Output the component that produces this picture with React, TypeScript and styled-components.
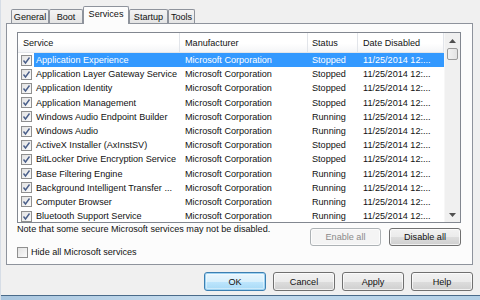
import React from "react";
import styled, { createGlobalStyle, css } from "styled-components";

const Global = createGlobalStyle`
  html, body { margin: 0; padding: 0; }
  body { background: #f0f0f0; font-family: "Liberation Sans", Arial, sans-serif; }
`;

const Window = styled.div`
  width: 480px;
  height: 300px;
  overflow: hidden;
  background: #f0f0f0;
  display: flex;
  flex-direction: column;
  font-size: 9.1px;
  color: #111;
  box-sizing: border-box;
  border-left: 1px solid #d6dde6;
`;

const Body = styled.div`
  display: flex;
  flex-direction: column;
  padding: 5px 7px 0 5px;
`;

const TabStrip = styled.div`
  display: flex;
  align-items: flex-end;
  height: 18px;
  padding-left: 5px;
  position: relative;
  z-index: 1;
`;

const Tab = styled.div<{ $w: number; $active?: boolean }>`
  box-sizing: border-box;
  width: ${(p) => p.$w}px;
  height: 14px;
  display: flex;
  align-items: center;
  justify-content: center;
  border: 1px solid #8e939c;
  border-bottom: none;
  background: linear-gradient(#f4f4f4, #e4e4e4);
  border-radius: 2px 2px 0 0;
  ${(p) =>
    p.$active &&
    css`
      height: 18px;
      margin-bottom: -1px;
      padding-bottom: 3px;
      background: #fcfcfc;
      position: relative;
      z-index: 2;
    `}
`;

const TabPanel = styled.div`
  box-sizing: border-box;
  width: 467px;
  height: 242px;
  border: 1px solid #8e939c;
  background: #fcfcfc;
  padding: 8px 10px 0 10px;
  display: flex;
  flex-direction: column;
`;

const ListBox = styled.div`
  box-sizing: border-box;
  width: 444px;
  height: 191px;
  border: 1px solid #828790;
  background: #fff;
  display: flex;
`;

const Table = styled.div`
  width: 426px;
  display: flex;
  flex-direction: column;
  overflow: hidden;
`;

const Header = styled.div`
  display: grid;
  grid-template-columns: 162px 128px 50px 86px;
  height: 20px;
  flex: none;
  background: linear-gradient(#ffffff 0%, #ffffff 55%, #f4f5f7 100%);
  border-bottom: 1px solid #e3e6ea;
  box-sizing: border-box;
`;

const HeaderCell = styled.div<{ $pad: number }>`
  display: flex;
  align-items: center;
  padding-left: ${(p) => p.$pad}px;
  border-right: 1px solid #e2e5ea;
  white-space: nowrap;
`;

const Rows = styled.div`
  flex: 1;
  overflow: hidden;
`;

const Row = styled.div`
  display: flex;
  height: 14.2px;
  align-items: stretch;
`;

const CheckCell = styled.div`
  width: 16px;
  flex: none;
  display: flex;
  align-items: center;
  padding-left: 3px;
  box-sizing: border-box;
`;

const RowBody = styled.div<{ $selected?: boolean }>`
  display: grid;
  grid-template-columns: 146px 128px 50px 86px;
  flex: 1;
  align-items: center;
  ${(p) =>
    p.$selected &&
    css`
      background: #3399ff;
      color: #fff;
    `}
`;

const Cell = styled.div<{ $pad: number }>`
  padding-left: ${(p) => p.$pad}px;
  white-space: nowrap;
  overflow: hidden;
`;

const Scrollbar = styled.div`
  width: 16px;
  flex: none;
  background: #f0f0f0;
  border-left: 1px solid #f7f7f7;
  box-sizing: border-box;
  display: flex;
  flex-direction: column;
  align-items: center;
`;

const Arrow = styled.div`
  height: 15px;
  width: 100%;
  display: flex;
  align-items: center;
  justify-content: center;
`;

const Thumb = styled.div`
  width: 11px;
  height: 12px;
  box-sizing: border-box;
  border: 1px solid #9a9a9a;
  border-radius: 2px;
  background: linear-gradient(90deg, #f2f2f2, #e2e2e2);
`;

const Spacer = styled.div`
  flex: 1;
`;

const BottomArea = styled.div`
  display: grid;
  grid-template-columns: 1fr auto;
  grid-template-rows: 22px auto;
  width: 444px;
`;

const Note = styled.div`
  grid-column: 1;
  grid-row: 1;
  padding-top: 1px;
  white-space: nowrap;
`;

const PanelButtons = styled.div`
  grid-column: 2;
  grid-row: 1 / span 2;
  display: flex;
  gap: 8px;
  margin-top: 5px;
  align-self: start;
`;

const HideRow = styled.div`
  grid-column: 1;
  grid-row: 2;
  display: flex;
  align-items: center;
  gap: 3px;
  height: 12px;
  margin-top: 1px;
`;

const Button = styled.div<{ $w: number; $h: number; $disabled?: boolean; $default?: boolean }>`
  box-sizing: border-box;
  width: ${(p) => p.$w}px;
  height: ${(p) => p.$h}px;
  border: 1px solid #707070;
  border-radius: 3px;
  background: linear-gradient(#f2f2f2 0%, #ebebeb 50%, #dddddd 51%, #cfcfcf 100%);
  box-shadow: inset 0 0 0 1px rgba(255, 255, 255, 0.7);
  display: flex;
  align-items: center;
  justify-content: center;
  ${(p) =>
    p.$disabled &&
    css`
      border-color: #adb2b5;
      background: #f4f4f4;
      color: #8a8a8a;
    `}
  ${(p) =>
    p.$default &&
    css`
      border-color: #3c7fb1;
      box-shadow: inset 0 0 0 1px #9fd3f2, inset 0 0 0 2px rgba(255, 255, 255, 0.4);
      background: linear-gradient(#eaf6fd 0%, #d9f0fc 50%, #bee6fd 51%, #a7d9f5 100%);
    `}
`;

const DialogButtons = styled.div`
  display: flex;
  justify-content: flex-end;
  gap: 7px;
  margin-top: 7px;
`;

const FrameBottom = styled.div`
  margin-top: auto;
  height: 4px;
  border-top: 1px solid #4a6b8a;
  background: linear-gradient(90deg, #a9c6df, #c5dcee 40%, #b4d0e6);
`;

const Box = styled.div`
  width: 11px;
  height: 11px;
  box-sizing: border-box;
  border: 1px solid #8f8f8f;
  background: linear-gradient(135deg, #e2e2e2, #fbfbfb);
  display: flex;
  align-items: center;
  justify-content: center;
`;

function CheckBox({ checked }: { checked?: boolean }) {
  return (
    <Box>
      {checked && (
        <svg width="9" height="9" viewBox="0 0 9 9">
          <path d="M1.5 4.5 L3.5 7 L7.5 1.5" fill="none" stroke="#4a5f8a" strokeWidth="1.4" />
        </svg>
      )}
    </Box>
  );
}

const services: [string, string][] = [
  ["Application Experience", "Stopped"],
  ["Application Layer Gateway Service", "Stopped"],
  ["Application Identity", "Stopped"],
  ["Application Management", "Stopped"],
  ["Windows Audio Endpoint Builder", "Running"],
  ["Windows Audio", "Running"],
  ["ActiveX Installer (AxInstSV)", "Stopped"],
  ["BitLocker Drive Encryption Service", "Stopped"],
  ["Base Filtering Engine", "Running"],
  ["Background Intelligent Transfer ...", "Running"],
  ["Computer Browser", "Running"],
  ["Bluetooth Support Service", "Running"],
];

const tabs: [string, number][] = [
  ["General", 38],
  ["Boot", 34],
  ["Services", 46],
  ["Startup", 39],
  ["Tools", 27],
];

export default function App() {
  return (
    <Window>
      <Global />
      <Body>
        <TabStrip>
          {tabs.map(([label, w]) => (
            <Tab key={label} $w={w} $active={label === "Services"}>
              {label}
            </Tab>
          ))}
        </TabStrip>
        <TabPanel>
          <ListBox>
            <Table>
              <Header>
                <HeaderCell $pad={5}>Service</HeaderCell>
                <HeaderCell $pad={5}>Manufacturer</HeaderCell>
                <HeaderCell $pad={4}>Status</HeaderCell>
                <HeaderCell $pad={5}>Date Disabled</HeaderCell>
              </Header>
              <Rows>
                {services.map(([name, status], i) => (
                  <Row key={name}>
                    <CheckCell>
                      <CheckBox checked />
                    </CheckCell>
                    <RowBody $selected={i === 0}>
                      <Cell $pad={2}>{name}</Cell>
                      <Cell $pad={5}>Microsoft Corporation</Cell>
                      <Cell $pad={4}>{status}</Cell>
                      <Cell $pad={5}>11/25/2014 12:...</Cell>
                    </RowBody>
                  </Row>
                ))}
              </Rows>
            </Table>
            <Scrollbar>
              <Arrow>
                <svg width="7" height="4" viewBox="0 0 7 4">
                  <path d="M0 4 L3.5 0 L7 4 Z" fill="#505050" />
                </svg>
              </Arrow>
              <Thumb />
              <Spacer />
              <Arrow>
                <svg width="7" height="4" viewBox="0 0 7 4">
                  <path d="M0 0 L3.5 4 L7 0 Z" fill="#505050" />
                </svg>
              </Arrow>
            </Scrollbar>
          </ListBox>
          <BottomArea>
            <Note>Note that some secure Microsoft services may not be disabled.</Note>
            <PanelButtons>
              <Button $w={71} $h={18} $disabled>Enable all</Button>
              <Button $w={72} $h={18}>Disable all</Button>
            </PanelButtons>
            <HideRow>
              <CheckBox />
              <span>Hide all Microsoft services</span>
            </HideRow>
          </BottomArea>
        </TabPanel>
        <DialogButtons>
          <Button $w={62} $h={19} $default>OK</Button>
          <Button $w={62} $h={19}>Cancel</Button>
          <Button $w={62} $h={19}>Apply</Button>
          <Button $w={62} $h={19}>Help</Button>
        </DialogButtons>
      </Body>
      <FrameBottom />
    </Window>
  );
}
